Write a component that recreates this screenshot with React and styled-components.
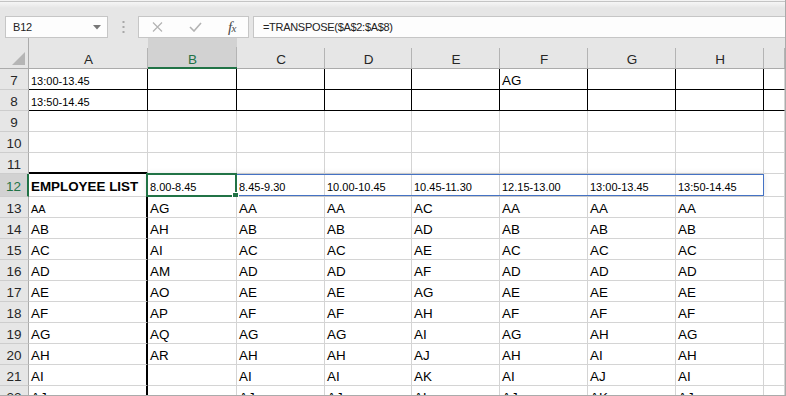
import React from "react";
import styled, { createGlobalStyle } from "styled-components";

const GlobalStyle = createGlobalStyle`
  html, body {
    margin: 0;
    padding: 0;
    background: #fff;
  }
  body {
    font-family: "Liberation Sans", Arial, sans-serif;
  }
`;

const COLS = "29px 119px 89px 88px 87px 88px 88px 88px 88px 1fr";
const GREEN = "#217346";

const Window = styled.div`
  box-sizing: border-box;
  width: 786px;
  height: 396px;
  border-right: 1px solid #ababab;
  border-bottom: 1px solid #ababab;
  overflow: hidden;
  display: flex;
  flex-direction: column;
  background: #fff;
`;

const Toolbar = styled.div`
  box-sizing: border-box;
  height: 38px;
  flex-shrink: 0;
  display: flex;
  align-items: flex-start;
  padding: 16px 0 0 5px;
  background: linear-gradient(
    #f3f3f3 0,
    #f3f3f3 1px,
    #c4c4c4 1px,
    #c4c4c4 2px,
    #f6f6f6 2px,
    #e6e6e6 8px,
    #e6e6e6 100%
  );
`;

const Box = styled.div`
  box-sizing: border-box;
  height: 22px;
  border: 1px solid #c6c6c6;
  background: #fdfdfd;
  display: flex;
  align-items: center;
  font-size: 11px;
  color: #222;
`;

const NameBox = styled(Box)`
  width: 103px;
  padding: 0 6px 0 7px;
  justify-content: space-between;
  letter-spacing: -0.2px;
`;

const Grip = styled.div`
  width: 30px;
  height: 22px;
  display: flex;
  align-items: center;
  justify-content: center;
`;

const FxBox = styled(Box)`
  width: 111px;
  padding: 0 12px 0 13px;
  justify-content: space-between;
`;

const Fx = styled.span`
  font-family: "Liberation Serif", "Times New Roman", serif;
  font-style: italic;
  font-size: 15px;
  color: #4a4a4a;
  letter-spacing: -0.5px;
  & small {
    font-size: 11px;
  }
`;

const FormulaBox = styled(Box)`
  flex: 1;
  margin-left: 4px;
  padding-left: 9px;
  border-right: none;
  letter-spacing: -0.3px;
`;

const Sheet = styled.div`
  flex: 1;
  overflow: hidden;
`;

const Row = styled.div`
  position: relative;
  display: grid;
  grid-template-columns: ${COLS};
  height: ${p => p.$h}px;
`;

const Corner = styled.div`
  box-sizing: border-box;
  background: #e6e6e6;
  border-right: 1px solid #ababab;
  border-bottom: 1px solid #ababab;
  display: flex;
  align-items: flex-end;
  justify-content: flex-end;
  padding: 0 3px 3px 0;
`;

const ColHead = styled.div`
  box-sizing: border-box;
  display: flex;
  justify-content: center;
  align-items: flex-end;
  padding-bottom: ${p => (p.$sel ? 0 : 1)}px;
  font-size: 13.5px;
  color: ${p => (p.$sel ? GREEN : "#262626")};
  background: linear-gradient(#b4b4b4, #b4b4b4) right bottom / 1px 20px
      no-repeat,
    ${p => (p.$sel ? "#d2d2d2" : "#e6e6e6")};
  border-bottom: ${p => (p.$sel ? `2px solid ${GREEN}` : "1px solid #ababab")};
`;

const RowHead = styled.div`
  box-sizing: border-box;
  display: flex;
  justify-content: center;
  align-items: flex-end;
  padding-bottom: ${p => (p.$pb != null ? p.$pb : 1)}px;
  font-size: 13.5px;
  line-height: 15px;
  color: ${p => (p.$sel ? GREEN : "#262626")};
  background: ${p => (p.$sel ? "#d2d2d2" : "#e6e6e6")};
  border-right: ${p => (p.$sel ? `2px solid ${GREEN}` : "1px solid #ababab")};
  border-bottom: 1px solid #cdcdcd;
`;

const Cell = styled.div`
  box-sizing: border-box;
  display: flex;
  align-items: flex-end;
  overflow: hidden;
  white-space: nowrap;
  padding: 0 0 ${p => (p.$pb != null ? p.$pb : 1)}px 2px;
  font-size: ${p => (p.$small ? 11 : 13.4)}px;
  line-height: ${p => (p.$small ? 13 : 15)}px;
  font-weight: ${p => (p.$bold ? 700 : 400)};
  color: #000;
  background: #fff;
  border-right: ${p => p.$right};
  border-bottom: ${p => p.$bottom};
`;

const CopyRange = styled.div`
  position: absolute;
  left: 147px;
  top: 0;
  width: 617px;
  height: 22px;
  box-sizing: border-box;
  border: 1px solid #4472c4;
  box-shadow: 0 0 6px rgba(0, 0, 0, 0.12);
  pointer-events: none;
`;

const Selection = styled.div`
  position: absolute;
  left: 146px;
  top: -1px;
  width: 91px;
  height: 24px;
  box-sizing: border-box;
  border: 2px solid ${GREEN};
  pointer-events: none;
`;

const Handle = styled.div`
  position: absolute;
  right: -3px;
  bottom: -3px;
  width: 5px;
  height: 5px;
  background: ${GREEN};
  box-shadow: 0 0 0 1px #fff;
`;

const LETTERS = ["A", "B", "C", "D", "E", "F", "G", "H", ""];

const LINE = "1px solid #d4d4d4";
const BLACK = "1px solid #000";
const THICK = "2px solid #000";

const blank = n => Array.from({ length: n }, () => ({}));

const rows = [
  { n: 7, cells: [{ t: "13:00-13.45", small: true }, {}, {}, {}, {}, { t: "AG" }, {}, {}, {}] },
  { n: 8, cells: [{ t: "13:50-14.45", small: true }, ...blank(8)] },
  { n: 9, cells: blank(9) },
  { n: 10, cells: blank(9) },
  { n: 11, cells: blank(9) },
  {
    n: 12,
    h: 23,
    pb: 2,
    sel: true,
    cells: [
      { t: "EMPLOYEE LIST", bold: true },
      { t: "8.00-8.45", small: true },
      { t: "8.45-9.30", small: true },
      { t: "10.00-10.45", small: true },
      { t: "10.45-11.30", small: true },
      { t: "12.15-13.00", small: true },
      { t: "13:00-13.45", small: true },
      { t: "13:50-14.45", small: true },
      {}
    ]
  },
  ...[
    ["AA", "AG", "AA", "AA", "AC", "AA", "AA", "AA"],
    ["AB", "AH", "AB", "AB", "AD", "AB", "AB", "AB"],
    ["AC", "AI", "AC", "AC", "AE", "AC", "AC", "AC"],
    ["AD", "AM", "AD", "AD", "AF", "AD", "AD", "AD"],
    ["AE", "AO", "AE", "AE", "AG", "AE", "AE", "AE"],
    ["AF", "AP", "AF", "AF", "AH", "AF", "AF", "AF"],
    ["AG", "AQ", "AG", "AG", "AI", "AG", "AH", "AG"],
    ["AH", "AR", "AH", "AH", "AJ", "AH", "AI", "AH"],
    ["AI", "", "AI", "AI", "AK", "AI", "AJ", "AI"],
    ["AJ", "", "AJ", "AJ", "AL", "AJ", "AK", "AJ"]
  ].map((vals, i) => ({
    n: 13 + i,
    cells: [...vals, ""].map((t, c) => ({ t, small: i === 0 && c === 0 }))
  }))
];

const bordersFor = (n, c) => {
  const boxed = n === 7 || n === 8;
  let right = LINE;
  let bottom = LINE;
  if (boxed) {
    right = c === 8 ? LINE : BLACK;
    bottom = BLACK;
  }
  if (c === 0 && n >= 12) right = THICK;
  if (c === 0 && n === 11) bottom = THICK;
  return { right, bottom };
};

const CornerMark = () => (
  <svg width="13" height="13" viewBox="0 0 13 13">
    <polygon points="13,0 13,13 0,13" fill="#b5b5b5" />
  </svg>
);

const Caret = () => (
  <svg width="8" height="5" viewBox="0 0 8 5">
    <polygon points="0,0 8,0 4,4.5" fill="#777" />
  </svg>
);

const Dots = () => (
  <svg width="3" height="12" viewBox="0 0 3 12">
    <rect x="0.5" y="0" width="2" height="2" fill="#a8a8a8" />
    <rect x="0.5" y="5" width="2" height="2" fill="#a8a8a8" />
    <rect x="0.5" y="10" width="2" height="2" fill="#a8a8a8" />
  </svg>
);

const Cross = () => (
  <svg width="11" height="10" viewBox="0 0 11 10">
    <path d="M1 0.5 L10 9.5 M10 0.5 L1 9.5" stroke="#b3b3b3" strokeWidth="1.2" fill="none" />
  </svg>
);

const Check = () => (
  <svg width="13" height="10" viewBox="0 0 13 10">
    <path d="M1 5 L5 9 L12 1" stroke="#b3b3b3" strokeWidth="1.6" fill="none" />
  </svg>
);

const FormulaBar = () => (
  <Toolbar>
    <NameBox>
      <span>B12</span>
      <Caret />
    </NameBox>
    <Grip>
      <Dots />
    </Grip>
    <FxBox>
      <Cross />
      <Check />
      <Fx>
        f<small>x</small>
      </Fx>
    </FxBox>
    <FormulaBox>=TRANSPOSE($A$2:$A$8)</FormulaBox>
  </Toolbar>
);

const App = () => (
  <>
    <GlobalStyle />
    <Window>
      <FormulaBar />
      <Sheet>
        <Row $h={31}>
          <Corner>
            <CornerMark />
          </Corner>
          {LETTERS.map((l, i) => (
            <ColHead key={i} $sel={l === "B"}>
              {l}
            </ColHead>
          ))}
        </Row>
        {rows.map(r => (
          <Row key={r.n} $h={r.h || 21}>
            <RowHead $sel={r.sel} $pb={r.pb}>
              {r.n}
            </RowHead>
            {r.cells.map((c, i) => {
              const b = bordersFor(r.n, i);
              return (
                <Cell
                  key={i}
                  $small={c.small}
                  $bold={c.bold}
                  $pb={r.pb}
                  $right={b.right}
                  $bottom={b.bottom}
                >
                  {c.t}
                </Cell>
              );
            })}
            {r.sel && (
              <>
                <CopyRange />
                <Selection>
                  <Handle />
                </Selection>
              </>
            )}
          </Row>
        ))}
      </Sheet>
    </Window>
  </>
);

export default App;
